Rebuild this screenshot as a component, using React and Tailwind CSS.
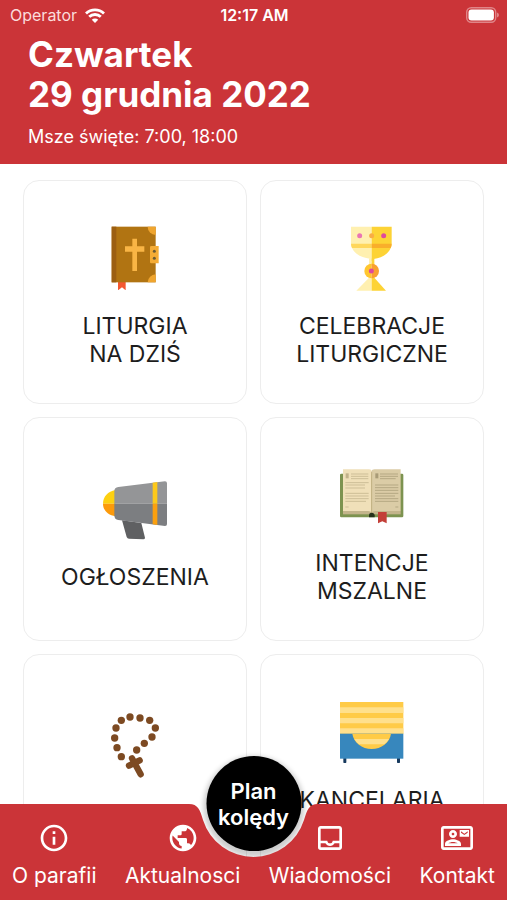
import React from "react";
import { MdInfoOutline, MdPublic, MdOutlineInbox, MdOutlineContactMail } from "react-icons/md";

function BookIcon() {
  return (
    <svg viewBox="39 48 192 192" className="size-16" aria-hidden="true">
      <path d="M84 215h23v26l-11-9-12 9z" fill="#f4572f" />
      <rect x="65" y="50" width="132" height="167" fill="#b17412" />
      <rect x="65" y="50" width="14" height="167" fill="#9c5f12" />
      <path d="M173 50h24v25a25 25 0 0 1-24-25z" fill="#f0a52e" />
      <path d="M173 217h24v-24a25 25 0 0 0-24 24z" fill="#f0a52e" />
      <path d="M127 86h14v23h22v16h-22v58h-14v-58h-22v-16h22z" fill="#f9b545" />
      <path d="M184 108h22v52h-22a4 4 0 0 1-4-4v-44a4 4 0 0 1 4-4z" fill="#f5ac35" />
      <circle cx="193" cy="124" r="4.5" fill="#6c5a33" />
      <circle cx="193" cy="145" r="4.5" fill="#6c5a33" />
    </svg>
  );
}

function ChaliceIcon() {
  return (
    <svg viewBox="33 48 192 192" className="size-16 overflow-visible" aria-hidden="true">
      <path d="M66 50h62v103h-5v-7c-33-3-57-22-57-46z" fill="#fff0b0" />
      <path d="M128 50h60v50c0 24-22 43-54 47v6h-6z" fill="#fdd335" />
      <path d="M66 101h62v13H69q-3-6-3-13z" fill="#ffd75c" />
      <path d="M128 101h60q0 7-3 13h-57z" fill="#f9ae2b" />
      <rect x="120" y="145" width="8" height="22" fill="#fff0b0" />
      <rect x="128" y="145" width="8" height="22" fill="#fdd335" />
      <path d="M128 200v42H82l38-39z" fill="#fff0b0" />
      <path d="M128 200v42h43l-35-39z" fill="#fdd335" />
      <path d="M128 161a22 22 0 0 0 0 44z" fill="#ffc62f" />
      <path d="M128 161a22 22 0 0 1 0 44z" fill="#f9a02f" />
      <circle cx="127" cy="183" r="7.5" fill="#df489b" />
      <circle cx="92" cy="77" r="7.5" fill="#ea75b4" />
      <circle cx="128" cy="77" r="7.5" fill="#f9ad45" />
      <circle cx="164" cy="77" r="7.5" fill="#df4a9c" />
    </svg>
  );
}

function MegaphoneIcon() {
  return (
    <svg viewBox="39 36 192 192" className="size-16 overflow-visible" aria-hidden="true">
      <path d="M96 166l58 8 11 44q0 5-5 5l-43-2q-5 0-7-5z" fill="#5f6062" />
      <path d="M76 75c-22 4-37 20-37 41h37z" fill="#fdd011" />
      <path d="M76 154c-22-4-37-18-37-38h37z" fill="#fc9a0b" />
      <path d="M73 116V79q0-12 12-13l140-17q6 0 6 6v61z" fill="#949597" />
      <path d="M73 116v35q0 12 12 14l140 18q6 0 6-6v-61z" fill="#7c7e81" />
      <path d="M188 53l14-2v65h-14z" fill="#fdc91a" />
      <path d="M188 116h14v64l-14-2z" fill="#fba00e" />
    </svg>
  );
}

function OpenBookIcon() {
  return (
    <svg viewBox="33 24 192 192" className="size-16 overflow-visible" aria-hidden="true">
      <rect x="33" y="56" width="190" height="131" rx="4" fill="#7d9350" />
      <rect x="42" y="168" width="173" height="10" fill="#c3b48b" />
      <path d="M42 43h78q8 0 8 7v124q-3-6-10-6H42z" fill="#f0e0b9" />
      <path d="M215 43h-78q-9 0-9 7v124q3-6 10-6h77z" fill="#dbcca6" />
      <path d="M128 50v124" stroke="#c2b083" strokeWidth="3" />
      <path
        d="M66 57h52M66 64h52M66 71h52M49 83h70M49 90h59M49 99h59M49 115h70M49 123h70M49 131h70M49 139h62M49 156h10"
        stroke="#cdbe97" strokeWidth="3" fill="none"
      />
      <path
        d="M153 57h54M153 64h54M153 71h47M138 90h70M138 98h70M138 106h70M138 115h70M138 123h60M138 131h70M138 139h70M199 156h9"
        stroke="#b5a883" strokeWidth="3" fill="none"
      />
      <rect x="50" y="55" width="9" height="15" fill="#c2b28a" />
      <rect x="139" y="55" width="9" height="15" fill="#a99b77" />
      <path d="M120 187v-6q0-8 8-8t9 8v6z" fill="#26321c" />
      <path d="M147 171h26v34l-13-6-13 6z" fill="#c33f38" />
    </svg>
  );
}

const BEADS = [
  [105, 54], [79, 64], [63, 87], [59, 117], [66, 146], [79, 173],
  [135, 57], [164, 64], [181, 87], [171, 114], [148, 133], [125, 153],
];

function RosaryIcon() {
  return (
    <svg viewBox="24 45 192 192" className="size-16 overflow-visible" aria-hidden="true">
      {BEADS.map(([cx, cy]) => (
        <circle key={`${cx}-${cy}`} cx={cx} cy={cy} r="11" fill="#7d4a22" />
      ))}
      <g stroke="#7d4a22" strokeWidth="19" strokeLinecap="round">
        <path d="M111 178l26 48" />
        <path d="M102 200l32-16" />
      </g>
    </svg>
  );
}

function OfficeIcon() {
  return (
    <svg viewBox="48 33 192 192" className="size-16" aria-hidden="true">
      <rect x="58" y="205" width="9" height="17" rx="2" fill="#173a5e" />
      <rect x="219" y="205" width="9" height="17" rx="2" fill="#173a5e" />
      <rect x="48" y="39" width="190" height="96" fill="#ffcb47" />
      <path d="M48 55h190v17H48zM48 87h190v16H48zM48 118h190v16H48z" fill="#ffe08c" />
      <rect x="48" y="134" width="190" height="75" fill="#3787bd" />
      <path d="M85 134h116c-4 27-29 46-58 46s-54-19-58-46z" fill="#ffcb47" />
      <path d="M91 150h104q-5 9-14 16H105q-9-7-14-16z" fill="#ffe08c" />
    </svg>
  );
}

const TILES = [
  { lines: ["LITURGIA", "NA DZIŚ"], Icon: BookIcon },
  { lines: ["CELEBRACJE", "LITURGICZNE"], Icon: ChaliceIcon },
  { lines: ["OGŁOSZENIA"], Icon: MegaphoneIcon },
  { lines: ["INTENCJE", "MSZALNE"], Icon: OpenBookIcon },
  { lines: ["MODLITWA"], Icon: RosaryIcon },
  { lines: ["KANCELARIA", "PARAFII"], Icon: OfficeIcon },
];

const TABS = [
  { label: "O parafii", Icon: MdInfoOutline },
  { label: "Aktualnosci", Icon: MdPublic },
  { label: "Wiadomości", Icon: MdOutlineInbox },
  { label: "Kontakt", Icon: MdOutlineContactMail },
];

function StatusBar() {
  return (
    <div className="grid grid-cols-3 items-center h-[30px] pl-[10px] pr-2 text-base">
      <div className="flex items-center gap-2 text-[#fbdcdc]">
        <span>Operator</span>
        <svg viewBox="0 0 20 15" className="w-5 h-[15px]" fill="none" stroke="#fff" strokeWidth="2.8" aria-hidden="true">
          <path d="M1 5.4a13 13 0 0 1 18 0" />
          <path d="M4.2 8.8a8.4 8.4 0 0 1 11.6 0" />
          <path d="M10 15l-3.2-3.3a4.6 4.6 0 0 1 6.4 0z" fill="#fff" stroke="none" />
        </svg>
      </div>
      <span className="text-center font-semibold">12:17 AM</span>
      <svg viewBox="0 0 33 16" className="w-[33px] h-4 justify-self-end" aria-hidden="true">
        <rect x="0.7" y="0.7" width="29" height="14.6" rx="4.5" fill="none" stroke="#e08588" strokeWidth="1.4" />
        <rect x="2.5" y="2.5" width="25.4" height="11" rx="3" fill="#fff" />
        <path d="M31 5.5q2 .8 2 2.5t-2 2.5z" fill="#e08588" />
      </svg>
    </div>
  );
}

function Tile({ lines, Icon }) {
  return (
    <button
      type="button"
      className="aspect-square flex flex-col items-center justify-center gap-[22px] pt-[10px] rounded-2xl border border-[#ededed] bg-white text-[23px] leading-7 text-[#1d1d1d]"
    >
      <Icon />
      <span>
        {lines.map((line) => (
          <span key={line} className="block">{line}</span>
        ))}
      </span>
    </button>
  );
}

function BottomBar() {
  return (
    <nav className="absolute inset-x-0 bottom-0 h-24 text-white">
      <button
        type="button"
        className="absolute left-1/2 -top-12 -translate-x-1/2 size-[95px] rounded-full bg-black text-[22px] leading-[26px] font-semibold shadow-[0_3px_5px_3px_rgba(0,0,0,0.2)]"
      >
        Plan
        <br />
        kolędy
      </button>
      {/* bar background with the cut-out for the round button */}
      <div className="absolute inset-0 flex pointer-events-none">
        <div className="flex-1 bg-[#cb3438]" />
        <svg viewBox="0 0 137 96" className="w-[137px] h-24" aria-hidden="true">
          <path
            d="M0 0H4C13 0 15 6 18 16A53 53 0 0 0 119 16C122 6 124 0 133 0H137V96H0Z"
            fill="#cb3438"
          />
        </svg>
        <div className="flex-1 bg-[#cb3438]" />
      </div>
      <div className="relative flex justify-between px-3 pt-[18px] pointer-events-none">
        {TABS.map(({ label, Icon }) => (
          <a key={label} href="#" className="flex flex-col items-center gap-2 text-[21px] leading-7 pointer-events-auto">
            <Icon className="size-8" />
            {label}
          </a>
        ))}
      </div>
    </nav>
  );
}

export default function App() {
  return (
    <div className="relative h-screen flex flex-col overflow-hidden bg-white font-['Inter',sans-serif]">
      <header className="shrink-0 bg-[#cb3438] text-white pb-4">
        <StatusBar />
        <div className="px-7 pt-1">
          <h1 className="text-[35px] leading-10 font-bold">
            Czwartek
            <br />
            29 grudnia 2022
          </h1>
          <p className="mt-3 text-lg leading-[22px]">Msze święte: 7:00, 18:00</p>
        </div>
      </header>
      <main className="flex-1 min-h-0 overflow-hidden px-[23px] pt-4">
        <div className="grid grid-cols-2 gap-[13px]">
          {TILES.map((tile) => (
            <Tile key={tile.lines[0]} {...tile} />
          ))}
        </div>
      </main>
      <BottomBar />
    </div>
  );
}
